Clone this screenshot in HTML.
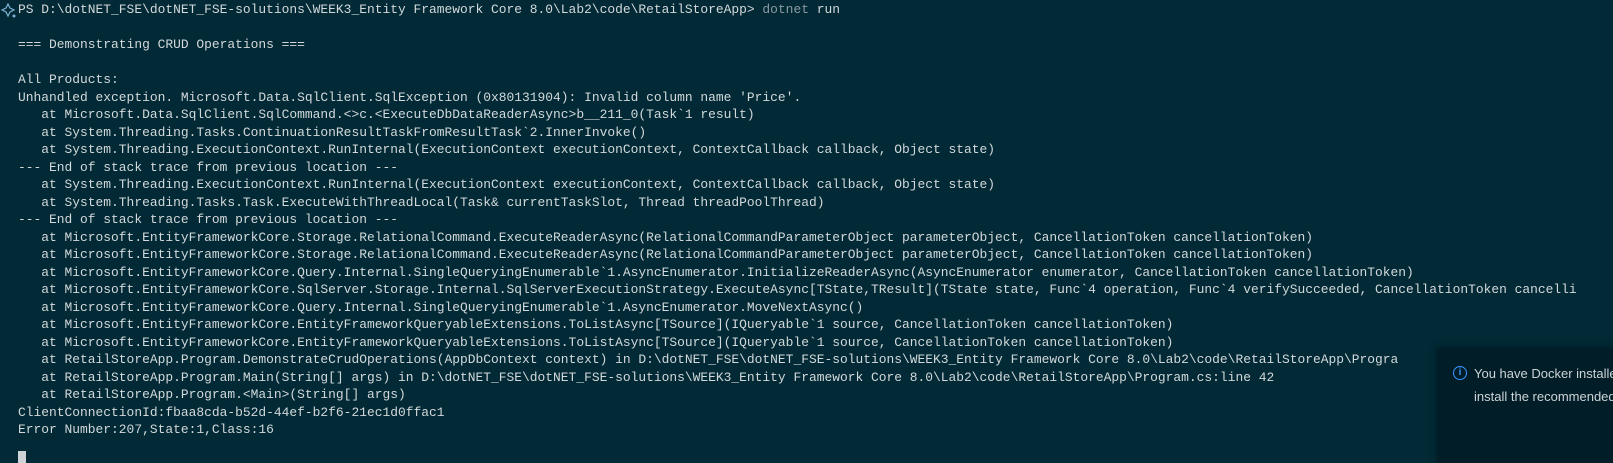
<!DOCTYPE html>
<html><head><meta charset="utf-8"><style>
html,body{margin:0;padding:0;width:1613px;height:463px;overflow:hidden;background:#012a36;}
.wrap{position:absolute;left:0;top:0;width:1613px;height:463px;overflow:hidden}
pre{margin:0;position:absolute;left:18px;top:1px;width:1595px;overflow:hidden;font-family:"Liberation Mono",monospace;font-size:12.93px;line-height:17.5px;color:#d3d8da;white-space:pre;}
.g{color:#8a9aa0}
.cur{position:absolute;left:18px;top:451px;width:8px;height:12px;background:#cdd3d6}
.toast{position:absolute;left:1437px;top:348px;width:176px;height:115px;overflow:hidden;background:#011e28;box-shadow:0 0 8px rgba(0,0,0,.4);}
.toast .t{position:absolute;left:37px;top:14px;font-family:"Liberation Sans",sans-serif;font-size:13px;line-height:23px;color:#cdd3d6;white-space:nowrap}
.ic{position:absolute;left:1453px;top:366px;width:12px;height:12px;border:1.5px solid #3794ff;border-radius:50%;color:#3794ff;font:bold 10px "Liberation Sans",sans-serif;text-align:center;line-height:12px}
</style></head><body><div class="wrap">
<svg style="position:absolute;left:1px;top:3px" width="16" height="16" viewBox="0 0 16 16"><path d="M7 1 L9 5 L13 7 L9 9 L7 13 L5 9 L1 7 L5 5 Z" fill="none" stroke="#7fb2d6" stroke-width="1.2"/><circle cx="13" cy="13" r="1.5" fill="#7fb2d6"/></svg>
<pre>PS D:\dotNET_FSE\dotNET_FSE-solutions\WEEK3_Entity Framework Core 8.0\Lab2\code\RetailStoreApp&gt; <span class="g">dotnet</span> run

=== Demonstrating CRUD Operations ===

All Products:
Unhandled exception. Microsoft.Data.SqlClient.SqlException (0x80131904): Invalid column name 'Price'.
   at Microsoft.Data.SqlClient.SqlCommand.&lt;&gt;c.&lt;ExecuteDbDataReaderAsync&gt;b__211_0(Task`1 result)
   at System.Threading.Tasks.ContinuationResultTaskFromResultTask`2.InnerInvoke()
   at System.Threading.ExecutionContext.RunInternal(ExecutionContext executionContext, ContextCallback callback, Object state)
--- End of stack trace from previous location ---
   at System.Threading.ExecutionContext.RunInternal(ExecutionContext executionContext, ContextCallback callback, Object state)
   at System.Threading.Tasks.Task.ExecuteWithThreadLocal(Task&amp; currentTaskSlot, Thread threadPoolThread)
--- End of stack trace from previous location ---
   at Microsoft.EntityFrameworkCore.Storage.RelationalCommand.ExecuteReaderAsync(RelationalCommandParameterObject parameterObject, CancellationToken cancellationToken)
   at Microsoft.EntityFrameworkCore.Storage.RelationalCommand.ExecuteReaderAsync(RelationalCommandParameterObject parameterObject, CancellationToken cancellationToken)
   at Microsoft.EntityFrameworkCore.Query.Internal.SingleQueryingEnumerable`1.AsyncEnumerator.InitializeReaderAsync(AsyncEnumerator enumerator, CancellationToken cancellationToken)
   at Microsoft.EntityFrameworkCore.SqlServer.Storage.Internal.SqlServerExecutionStrategy.ExecuteAsync[TState,TResult](TState state, Func`4 operation, Func`4 verifySucceeded, CancellationToken cancelli
   at Microsoft.EntityFrameworkCore.Query.Internal.SingleQueryingEnumerable`1.AsyncEnumerator.MoveNextAsync()
   at Microsoft.EntityFrameworkCore.EntityFrameworkQueryableExtensions.ToListAsync[TSource](IQueryable`1 source, CancellationToken cancellationToken)
   at Microsoft.EntityFrameworkCore.EntityFrameworkQueryableExtensions.ToListAsync[TSource](IQueryable`1 source, CancellationToken cancellationToken)
   at RetailStoreApp.Program.DemonstrateCrudOperations(AppDbContext context) in D:\dotNET_FSE\dotNET_FSE-solutions\WEEK3_Entity Framework Core 8.0\Lab2\code\RetailStoreApp\Progra
   at RetailStoreApp.Program.Main(String[] args) in D:\dotNET_FSE\dotNET_FSE-solutions\WEEK3_Entity Framework Core 8.0\Lab2\code\RetailStoreApp\Program.cs:line 42
   at RetailStoreApp.Program.&lt;Main&gt;(String[] args)
ClientConnectionId:fbaa8cda-b52d-44ef-b2f6-21ec1d0ffac1
Error Number:207,State:1,Class:16
</pre>
<div class="cur"></div>
<div class="toast"><div class="t">You have Docker installed. Would you like to<br>install the recommended extensions?</div></div>
<div class="ic">i</div>
</div></body></html>
